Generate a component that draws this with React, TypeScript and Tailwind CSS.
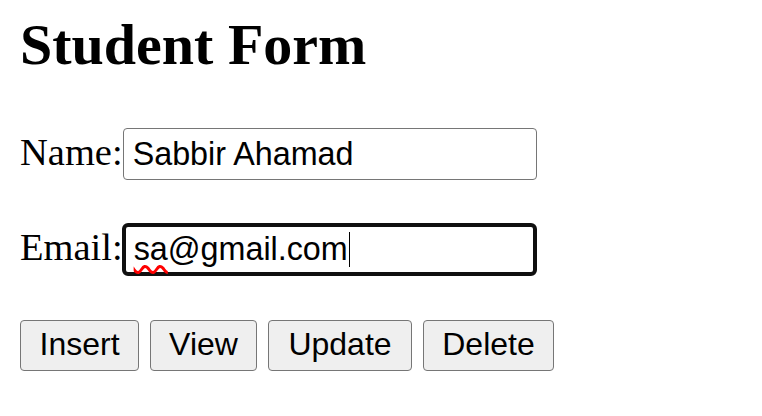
import React from "react";

const serif = "font-['Liberation_Serif','Times_New_Roman',serif]";
const sans = "font-['Liberation_Sans',Arial,sans-serif]";

export default function App() {
  return (
    <div className={`min-h-screen bg-white pl-[20px] text-black ${serif}`}>
      <h1 className="mt-[16px] text-[58px] leading-[58px] font-bold m-0">Student Form</h1>

      <div className="mt-[54px] flex items-baseline">
        <label className="text-[38.5px] leading-none">Name:</label>
        <input
          type="text"
          defaultValue="Sabbir Ahamad"
          className={`${sans} h-[52px] w-[414px] rounded-[4px] border border-[#767676] bg-white pl-[9px] pr-[7px] text-[32.3px] text-black outline-none`}
        />
      </div>

      <div className="mt-[43px] flex items-baseline">
        <label className="text-[38.5px] leading-none">Email:</label>
        <div
          className={`${sans} -ml-px flex h-[53px] w-[415px] items-center rounded-[6px] border-[4px] border-[#101010] bg-white pl-[8px] pr-[6px] text-[32.3px] text-black`}
        >
          <span>
            <span className="underline decoration-wavy decoration-[#ff0000] decoration-[2.5px] underline-offset-[5px]">
              sa
            </span>
            @gmail.com
          </span>
          <span className="ml-px inline-block h-[35px] w-px bg-black" />
        </div>
      </div>

      <div className={`mt-[44px] flex gap-[11px] ${sans}`}>
        {[
          ["Insert", "w-[119px]"],
          ["View", "w-[107px]"],
          ["Update", "w-[144px]"],
          ["Delete", "w-[131px]"],
        ].map(([label, w]) => (
          <button
            key={label}
            className={`${w} h-[51px] rounded-[4px] border border-[#767676] bg-[#efefef] pb-[3px] text-center text-[32px] leading-none text-black`}
          >
            {label}
          </button>
        ))}
      </div>
    </div>
  );
}
